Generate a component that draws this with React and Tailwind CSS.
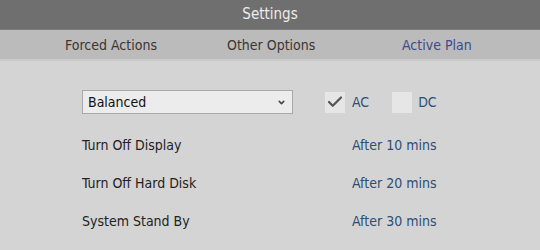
import { Check, ChevronDown } from "lucide-react"

const rows = [
  { label: "Turn Off Display", value: "After 10 mins" },
  { label: "Turn Off Hard Disk", value: "After 20 mins" },
  { label: "System Stand By", value: "After 30 mins" },
]

function App() {
  return (
    <div className="w-[540px] h-[250px] bg-[#d4d4d4] font-['DejaVu_Sans_Condensed',sans-serif] text-[14px] overflow-hidden">

      {/* title bar */}
      <div className="h-[30px] bg-[#6f6f6f] border-b border-[#7c7c7c] flex items-center justify-center text-[#ececec] text-[15px]">
        Settings
      </div>

      {/* tabs */}
      <div className="h-[31px] bg-[#bbbbbb] border-b-2 border-[#c9c9c9] flex items-center pl-[65px] pt-[1px] text-[#3d3530]">
        <span className="w-[162px]">Forced Actions</span>
        <span className="w-[175px]">Other Options</span>
        <span className="text-[#3d4a8c]">Active Plan</span>
      </div>

      <div className="pl-[82px] pt-[29px]">

        <div className="flex items-center h-[24px]">
          <div className="w-[211px] h-[24px] bg-[#ececec] border border-[#a9a9a9] flex items-center justify-between pl-[5px] pr-[6px] text-[#111]">
            <span>Balanced</span>
            <ChevronDown size={9} strokeWidth={4} className="text-[#444] mt-[1px]" />
          </div>

          <div className="ml-[32px] flex items-center gap-[7px]">
            <div className="w-[20px] h-[21px] bg-[#e6e6e6] flex items-center justify-center">
              <Check size={18} strokeWidth={3} className="text-[#555]" />
            </div>
            <span className="text-[#2c4f74]">AC</span>
          </div>

          <div className="ml-[23px] flex items-center gap-[6px]">
            <div className="w-[20px] h-[21px] bg-[#e6e6e6]" />
            <span className="text-[#2c4f74]">DC</span>
          </div>
        </div>

        <div className="mt-[23px] flex flex-col gap-[21px]">
          {rows.map((r) => (
            <div key={r.label} className="flex h-[17px] items-center">
              <span className="w-[270px] text-[#222]">{r.label}</span>
              <span className="text-[#2c4f74]">{r.value}</span>
            </div>
          ))}
        </div>

      </div>
    </div>
  )
}

export default App
